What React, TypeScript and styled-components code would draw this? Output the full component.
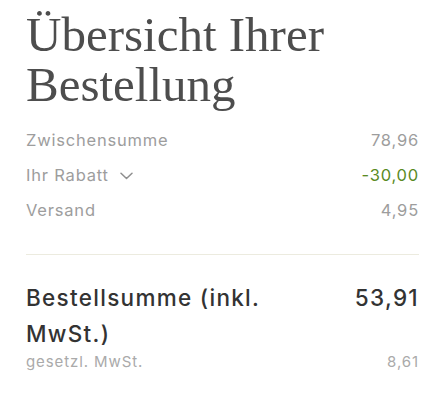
import React from "react";
import styled, { createGlobalStyle } from "styled-components";

const Global = createGlobalStyle`
  html, body { margin: 0; padding: 0; background: #ffffff; }
  body { font-family: "Inter", "Open Sans", sans-serif; -webkit-font-smoothing: antialiased; }
`;

const Panel = styled.section`
  padding: 10px 20px 0 26px;
  display: flex;
  flex-direction: column;
`;

const Title = styled.h1`
  margin: 0;
  font-family: "Liberation Serif", serif;
  font-weight: 400;
  font-size: 49px;
  line-height: 50px;
  color: #4d4d4d;
`;

const Rows = styled.div`
  margin-top: 13px;
  display: flex;
  flex-direction: column;
`;

const Row = styled.div`
  display: flex;
  justify-content: space-between;
  align-items: baseline;
  font-size: 16.5px;
  line-height: 35px;
  letter-spacing: 0.8px;
  color: #9d9d9d;
`;

const Label = styled.span`
  display: inline-flex;
  align-items: center;
  gap: 11px;
`;

const Value = styled.span<{ $accent?: boolean }>`
  color: ${(p) => (p.$accent ? "#5a8a24" : "#9d9d9d")};
`;

const Divider = styled.hr`
  margin: 26px 0 25px;
  border: 0;
  height: 1px;
  background: #ecebdf;
`;

const Total = styled.div`
  display: flex;
  justify-content: space-between;
  align-items: flex-start;
  gap: 24px;
  font-size: 22.5px;
  line-height: 36px;
  letter-spacing: 1.3px;
  color: #333333;
  font-weight: 500;
`;

const TotalLabel = styled.span`
  max-width: 270px;
`;

const Tax = styled.div`
  display: flex;
  justify-content: space-between;
  font-size: 15px;
  line-height: 20px;
  letter-spacing: 0.9px;
  color: #aaaaaa;
`;

const Chevron = () => (
  <svg width="13" height="8" viewBox="0 0 13 8" fill="none" aria-hidden="true">
    <path d="M1 1.2 L6.5 6.5 L12 1.2" stroke="#8f8f8f" strokeWidth="1.5" strokeLinecap="round" strokeLinejoin="round" />
  </svg>
);

export default function App() {
  return (
    <>
      <Global />
      <Panel>
        <Title>
          Übersicht Ihrer
          <br />
          Bestellung
        </Title>
        <Rows>
          <Row>
            <Label>Zwischensumme</Label>
            <Value>78,96</Value>
          </Row>
          <Row>
            <Label>
              Ihr Rabatt <Chevron />
            </Label>
            <Value $accent>-30,00</Value>
          </Row>
          <Row>
            <Label>Versand</Label>
            <Value>4,95</Value>
          </Row>
        </Rows>
        <Divider />
        <Total>
          <TotalLabel>Bestellsumme (inkl. MwSt.)</TotalLabel>
          <span>53,91</span>
        </Total>
        <Tax>
          <span>gesetzl. MwSt.</span>
          <span>8,61</span>
        </Tax>
      </Panel>
    </>
  );
}
